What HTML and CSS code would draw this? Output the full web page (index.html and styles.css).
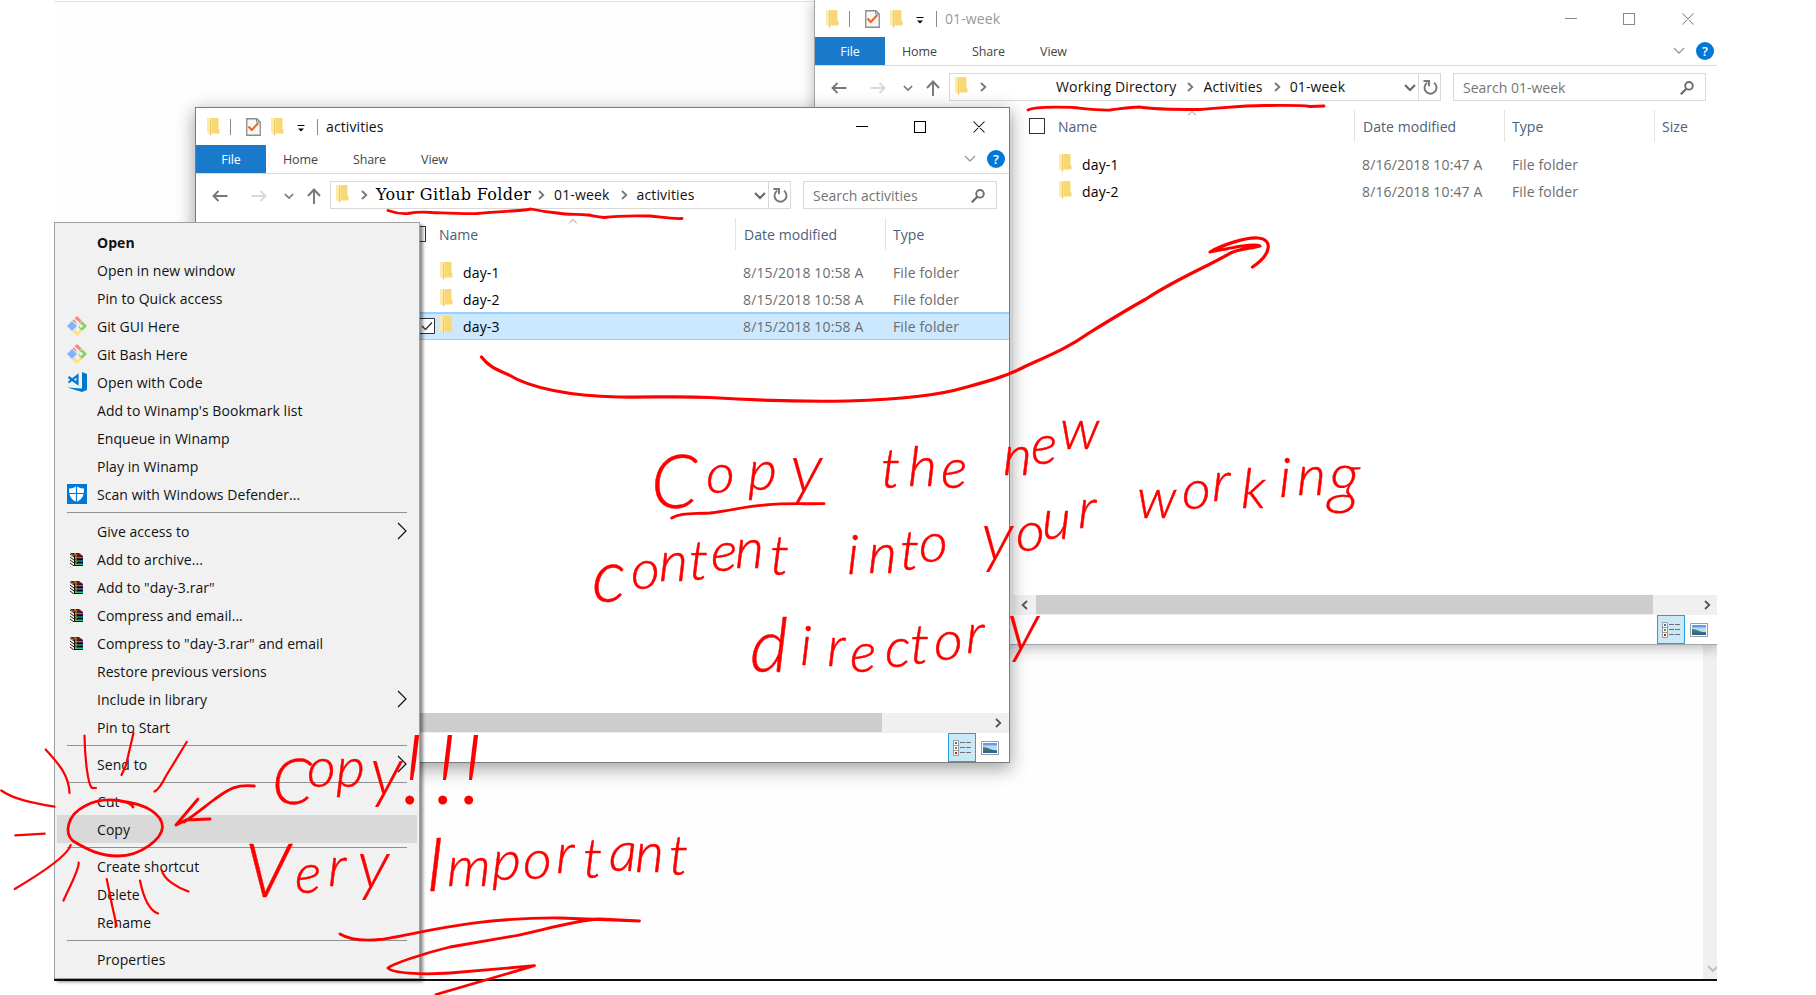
FILE: index.html
```html
<!DOCTYPE html>
<html lang="en">
<head>
<meta charset="utf-8">
<title>Copy the new content</title>
<link rel="stylesheet" href="styles.css">
</head>
<body>
<svg class="defs" width="0" height="0" aria-hidden="true">
  <symbol id="folder" viewBox="0 0 13 18"><path d="M3 0h8.500v11h1v4.500H3z" fill="#f8d775"/><path d="M0 0h3.500l1 2v15.500L0 15z" fill="#ffe9a6"/><path d="M3.500 1.500v16" stroke="#efc964" fill="none"/></symbol>
  <symbol id="props" viewBox="0 0 15 18"><path d="M.75.750h10L14.250 4v13.250H.750z" fill="#f7f7f7" stroke="#8b8b8b" stroke-width="1.300"/><path d="M10.500.800V4h3.700" fill="none" stroke="#8b8b8b"/><path d="M2.500 8.500l3.300 3.500 6.500-7" fill="none" stroke="#f0601e" stroke-width="2"/></symbol>
  <symbol id="more" viewBox="0 0 8 7"><path d="M.500 .500h7" stroke="#000"/><path d="M1 3.500h6L4 6.500z" fill="#000"/></symbol>
  <symbol id="back" viewBox="0 0 16 12"><path d="M15.500 6H1.500M6.500 1l-5 5 5 5" fill="none" stroke="currentColor" stroke-width="1.900"/></symbol>
  <symbol id="up" viewBox="0 0 14 16"><path d="M7 16V1.500M1 8l6-6.500L13 8" fill="none" stroke="#777" stroke-width="1.900"/></symbol>
  <symbol id="down" viewBox="0 0 12 8"><path d="M1 1l5 5 5-5" fill="none" stroke="currentColor" stroke-width="var(--w,2)"/></symbol>
  <symbol id="right" viewBox="0 0 7 10"><path d="M1 1l4.300 4L1 9" fill="none" stroke="currentColor" stroke-width="1.800"/></symbol>
  <symbol id="refresh" viewBox="0 0 15 15"><path d="M4.200 2.700A6 6 0 1 0 11 2.800" fill="none" stroke="#777" stroke-width="1.900"/><path d="M.500 1h5.500v5.300" fill="none" stroke="#777" stroke-width="1.900"/></symbol>
  <symbol id="search" viewBox="0 0 14 14"><circle cx="9" cy="4.800" r="3.800" fill="none" stroke="#6d6d6d" stroke-width="1.900"/><path d="M6.300 7.700L.800 13.300" stroke="#6d6d6d" stroke-width="2.300"/></symbol>
  <symbol id="controls" viewBox="0 0 130 14"><path d="M0 6.500h12M58.500 1.500h11v11h-11zM117.500 1.500l11 11M128.500 1.500l-11 11" fill="none" stroke="currentColor" stroke-width="1.050"/></symbol>
  <symbol id="details" viewBox="0 0 18 16"><path d="M.500.500h5v15h-5zM.500 5.500h5M.500 10.500h5" fill="#fff" stroke="#9a9a9a"/><path d="M2 2h2v2H2z" fill="#3c78b4"/><path d="M2 7h2v2H2z" fill="#7a8040"/><path d="M2 12h2v2H2z" fill="#c02a10"/><path d="M7 2.500h5M13 2.500h5M7 7.500h5M13 7.500h5M7 12.500h5M13 12.500h5" stroke="#707070"/></symbol>
  <symbol id="photo" viewBox="0 0 18 14"><path d="M.500.500h17v13H.500z" fill="#fff" stroke="#9c9c9c"/><path d="M2 2h14v10H2z" fill="#b9dcf8"/><path d="M2 2h14v2.500H2z" fill="#629cf2"/><path d="M2 6c5 0 7 3 14 3.500V10H2z" fill="#4b7b59"/><path d="M2 9.500h14V12H2z" fill="#2f63a0"/></symbol>
  <symbol id="git" viewBox="0 0 20 20"><path d="M10 0l4.500 4.500-4 4.500L5.500 4.500z" fill="#fd8080"/><path d="M5 5l5 5-5 5-5-5z" fill="#80b3ff"/><path d="M15 5l5 5-5 5-5-5z" fill="#87d35f"/><path d="M10 11l5 4.500-5 4.500-5-4.500z" fill="#ffe07d"/><path d="M7 2.500l4 4v8M11 7l4 3.500" fill="none" stroke="#f4f2ef" stroke-width="1.600"/><circle cx="10.500" cy="6.300" r="1.500" fill="#f4f2ef"/><circle cx="14" cy="10" r="1.700" fill="#f4f2ef"/><circle cx="10.500" cy="14" r="1.900" fill="#f4f2ef"/></symbol>
  <symbol id="code" viewBox="0 0 20 20"><path d="M15 0l5 2v16l-5 2L0 15.500l15 1z" fill="#0078cf"/><path d="M1.500 5l9 6.500v-8L1.500 10.500" fill="none" stroke="#0078cf" stroke-width="2.200"/></symbol>
  <symbol id="shield" viewBox="0 0 20 20"><path d="M0 0h20v20H0z" fill="#0078d7"/><path d="M2 4.500c3 .300 5.500-.800 7.500-2.500 2 1.700 4.500 2.800 7.500 2.500 0 6-1 10.500-7.500 13.500C3 15 2 10.500 2 4.500z" fill="#fff"/><path d="M9.500 1v17M2 9.500h16" stroke="#0078d7" stroke-width="1.200"/></symbol>
  <symbol id="rar" viewBox="0 0 13 13"><path d="M0 0h9l4 3H4z" fill="#751018"/><path d="M4 3h9v10H4z" fill="#100808"/><path d="M5 4.500h8" stroke="#d83a9a" stroke-width="1.500"/><path d="M5 8h8" stroke="#1776c4" stroke-width="1.600"/><path d="M5 11.300h8" stroke="#0fc97c" stroke-width="1.600"/><path d="M0 1l4 3M0 4l4 3M0 7l4 3M0 10l4 3" stroke="#222" fill="none"/><path d="M4 1h2v11" stroke="#c9b000" fill="none"/></symbol>
  <symbol id="sub" viewBox="0 0 10 18"><path d="M1 1l8 8-8 8" fill="none" stroke="#111" stroke-width="1.200"/></symbol>
</svg>

<main class="desktop">
  <section class="backdrop"><div class="backdrop-scroll"><svg class="ic chev"><use href="#down"/></svg></div></section>

  <section class="window inactive">
    <header class="titlebar">
      <svg class="ic fold"><use href="#folder"/></svg><i class="bar"></i><svg class="ic props"><use href="#props"/></svg><svg class="ic fold2"><use href="#folder"/></svg><svg class="ic more"><use href="#more"/></svg><i class="bar last"></i>
      <h2 class="title">01-week</h2><svg class="ic controls"><use href="#controls"/></svg>
    </header>
    <nav class="tabs"><span class="tab file">File</span><span class="tab">Home</span><span class="tab share">Share</span><span class="tab view">View</span><svg class="ic expand"><use href="#down"/></svg><span class="help">?</span></nav>
    <div class="navrow">
      <svg class="ic arrow"><use href="#back"/></svg><svg class="ic arrow fwd"><use href="#back"/></svg><svg class="ic recent"><use href="#down"/></svg><svg class="ic up"><use href="#up"/></svg>
      <div class="address"><svg class="ic fold"><use href="#folder"/></svg><svg class="ic sep first"><use href="#right"/></svg><span class="crumb working">Working Directory</span><svg class="ic sep"><use href="#right"/></svg><span class="crumb">Activities</span><svg class="ic sep"><use href="#right"/></svg><span class="crumb">01-week</span><svg class="ic drop"><use href="#down"/></svg><span class="reload"><svg class="ic refresh"><use href="#refresh"/></svg></span></div>
      <div class="search"><span>Search 01-week</span><svg class="ic mag"><use href="#search"/></svg></div>
    </div>
    <div class="body">
      <div class="tree"></div>
      <div class="files">
        <div class="head"><i class="box"></i><span class="c-name">Name</span><span class="c-date">Date modified</span><span class="c-type">Type</span><span class="c-size">Size</span><svg class="ic sort"><use href="#down"/></svg></div>
        <div class="rows">
          <div class="row"><svg class="ic fold"><use href="#folder"/></svg><span class="c-name">day-1</span><span class="c-date">8/16/2018 10:47 A</span><span class="c-type">File folder</span></div>
          <div class="row"><svg class="ic fold"><use href="#folder"/></svg><span class="c-name">day-2</span><span class="c-date">8/16/2018 10:47 A</span><span class="c-type">File folder</span></div>
        </div>
        <div class="scroll"><svg class="ic sleft"><use href="#right"/></svg><i class="thumb"></i><svg class="ic sright"><use href="#right"/></svg></div>
      </div>
    </div>
    <footer class="status"><span class="viewbtn"><svg class="ic details"><use href="#details"/></svg></span><svg class="ic photo"><use href="#photo"/></svg></footer>
  </section>

  <section class="window active">
    <header class="titlebar">
      <svg class="ic fold"><use href="#folder"/></svg><i class="bar"></i><svg class="ic props"><use href="#props"/></svg><svg class="ic fold2"><use href="#folder"/></svg><svg class="ic more"><use href="#more"/></svg><i class="bar last"></i>
      <h2 class="title">activities</h2><svg class="ic controls"><use href="#controls"/></svg>
    </header>
    <nav class="tabs"><span class="tab file">File</span><span class="tab">Home</span><span class="tab share">Share</span><span class="tab view">View</span><svg class="ic expand"><use href="#down"/></svg><span class="help">?</span></nav>
    <div class="navrow">
      <svg class="ic arrow"><use href="#back"/></svg><svg class="ic arrow fwd"><use href="#back"/></svg><svg class="ic recent"><use href="#down"/></svg><svg class="ic up"><use href="#up"/></svg>
      <div class="address"><svg class="ic fold"><use href="#folder"/></svg><svg class="ic sep first"><use href="#right"/></svg><span class="crumb gitlab">Your Gitlab Folder</span><svg class="ic sep"><use href="#right"/></svg><span class="crumb">01-week</span><svg class="ic sep"><use href="#right"/></svg><span class="crumb">activities</span><svg class="ic drop"><use href="#down"/></svg><span class="reload"><svg class="ic refresh"><use href="#refresh"/></svg></span></div>
      <div class="search"><span>Search activities</span><svg class="ic mag"><use href="#search"/></svg></div>
    </div>
    <div class="body">
      <div class="tree"></div>
      <div class="files">
        <div class="head"><i class="box"></i><span class="c-name">Name</span><span class="c-date">Date modified</span><span class="c-type">Type</span><svg class="ic sort"><use href="#down"/></svg></div>
        <div class="rows">
          <div class="row"><svg class="ic fold"><use href="#folder"/></svg><span class="c-name">day-1</span><span class="c-date">8/15/2018 10:58 A</span><span class="c-type">File folder</span></div>
          <div class="row"><svg class="ic fold"><use href="#folder"/></svg><span class="c-name">day-2</span><span class="c-date">8/15/2018 10:58 A</span><span class="c-type">File folder</span></div>
          <div class="row selected"><svg class="check" viewBox="0 0 16 16"><path d="M.500.500h15v15H.500z" fill="#fff" stroke="#333"/><path d="M3 8l3.500 3.500L13 4.500" fill="none" stroke="#333" stroke-width="1.400"/></svg><svg class="ic fold"><use href="#folder"/></svg><span class="c-name">day-3</span><span class="c-date">8/15/2018 10:58 A</span><span class="c-type">File folder</span></div>
        </div>
        <div class="scroll"><svg class="ic sleft"><use href="#right"/></svg><i class="thumb"></i><svg class="ic sright"><use href="#right"/></svg></div>
      </div>
    </div>
    <footer class="status"><span class="viewbtn"><svg class="ic details"><use href="#details"/></svg></span><svg class="ic photo"><use href="#photo"/></svg></footer>
  </section>

  <ul class="menu">
    <li class="item bold"><i class="slot"></i><span>Open</span></li>
    <li class="item"><i class="slot"></i><span>Open in new window</span></li>
    <li class="item"><i class="slot"></i><span>Pin to Quick access</span></li>
    <li class="item"><svg class="slot"><use href="#git"/></svg><span>Git GUI Here</span></li>
    <li class="item"><svg class="slot"><use href="#git"/></svg><span>Git Bash Here</span></li>
    <li class="item"><svg class="slot"><use href="#code"/></svg><span>Open with Code</span></li>
    <li class="item"><i class="slot"></i><span>Add to Winamp's Bookmark list</span></li>
    <li class="item"><i class="slot"></i><span>Enqueue in Winamp</span></li>
    <li class="item"><i class="slot"></i><span>Play in Winamp</span></li>
    <li class="item"><svg class="slot"><use href="#shield"/></svg><span>Scan with Windows Defender...</span></li>
    <li class="rule"></li>
    <li class="item"><i class="slot"></i><span>Give access to</span><svg class="sub"><use href="#sub"/></svg></li>
    <li class="item"><svg class="slot rar"><use href="#rar"/></svg><span>Add to archive...</span></li>
    <li class="item"><svg class="slot rar"><use href="#rar"/></svg><span>Add to "day-3.rar"</span></li>
    <li class="item"><svg class="slot rar"><use href="#rar"/></svg><span>Compress and email...</span></li>
    <li class="item"><svg class="slot rar"><use href="#rar"/></svg><span>Compress to "day-3.rar" and email</span></li>
    <li class="item"><i class="slot"></i><span>Restore previous versions</span></li>
    <li class="item"><i class="slot"></i><span>Include in library</span><svg class="sub"><use href="#sub"/></svg></li>
    <li class="item"><i class="slot"></i><span>Pin to Start</span></li>
    <li class="rule"></li>
    <li class="item"><i class="slot"></i><span>Send to</span><svg class="sub"><use href="#sub"/></svg></li>
    <li class="rule"></li>
    <li class="item"><i class="slot"></i><span>Cut</span></li>
    <li class="item hover"><i class="slot"></i><span>Copy</span></li>
    <li class="rule"></li>
    <li class="item"><i class="slot"></i><span>Create shortcut</span></li>
    <li class="item"><i class="slot"></i><span>Delete</span></li>
    <li class="item"><i class="slot"></i><span>Rename</span></li>
    <li class="rule"></li>
    <li class="item"><i class="slot"></i><span>Properties</span></li>
  </ul>
</main>

<svg class="ink" viewBox="0 0 1816 995">
  <g class="strokes">
    <path d="M1028 110C1036 106 1060 107 1073 107.500C1088 109 1098 110.500 1110 110C1120 109 1130 107 1139 107C1150 109 1180 109.500 1200 109.500C1225 108 1240 105.500 1265 105.500S1300 105 1310 106.500L1324 106"/>
    <path d="M388 210.500C395 213 402 214 408 213.500C416 212 424 212 432 212.500C446 213 462 214 477 213.500C495 211 515 212 531 209C540 211 547 212 557 213C568 215 578 214 588 215C594 216 598 217 604 217.500C615 216 630 215.500 650 216C662 217 670 219 682 218.500"/>
    <path class="bold-ink" d="M481.500 357C490 368 498 370 509 375C530 388 570 396 618 397C650 397.500 680 396 710 397.500C750 400 800 402 848 401C880 400 930 398 963 388C985 382 1005 377 1026 366C1048 356 1068 348 1089 333C1110 320 1128 309 1146 299C1175 280 1200 270 1227 255C1238 248 1250 249 1260 246C1255 243 1235 247 1210 252C1220 246 1245 237 1258 238C1273 239 1272 254 1252.500 267"/>
    <path d="M671.700 518C680 513 690 514 710 513C735 510 745 506 765 505C785 503 800 504 824 503.700"/>
    <path d="M133 807C130 800 103 796 85 806C67 815 64 833 73 841C88 850 100 856 118 856C142 856 162 838 162.500 827C162 815 148 804 120 801"/>
    <path d="M254.300 786C235 784 228 790 215 799C203 808 193 816 184 822M210 819L186 820L176 825L198 799"/>
    <path d="M340 934C350 940 365 941 380 939.500C410 936 470 917 560 918L639.500 921L600 919C575 920 540 931 514 936L450 947C425 953 392 964 388 968C392 973 420 975 450 973L534.500 965.700L436 994.500"/>
    <path class="ray" d="M45.700 749.500C58 763 69 775 69.500 793M84.500 735.700C85 760 88 785 92 788L96 788M133.500 733L126 765L121.500 775M186.700 742L166 776C162 784 158 790 154.500 791.500M1.300 790.500C13 799 32 803 54.500 806.700M15.300 835.300L44.700 833.700M70.700 845C68 855 40 874 14.700 889M78.700 862.700C79 870 68 890 63.500 900.500M106.700 879L112 905L116.700 926M140 880.700C143 895 148 910 158 913.500M161.700 870C164 880 178 888 188.500 891.500"/>
  </g>
  <g class="hand">
    <text><tspan class="cap" x="651" y="508">C</tspan><tspan x="706 748" y="493 490">op</tspan><tspan class="tail" x="790" y="492">y</tspan></text>
    <text x="881 908 941" y="488 486 488">the</text>
    <text x="1003 1031 1060" y="475 464 449">new</text>
    <text><tspan class="cap" x="592" y="602">c</tspan><tspan x="631 659 689 711 735 770" y="589 581 580 571 568 575">ontent</tspan></text>
    <text x="847 868 900 919" y="574 573 570 562">into</text>
    <text><tspan class="tail" x="981" y="560">y</tspan><tspan x="1016 1042 1078" y="551 539 528">our</tspan></text>
    <text><tspan x="1137 1182 1212 1241 1279 1297" y="518 509 501 508 497 495">workin</tspan><tspan class="tail" x="1328" y="500">g</tspan></text>
    <text><tspan class="cap" x="750" y="672">d</tspan><tspan x="800 827 850 885 910 934 966" y="665 666 672 667 664 660 653">irector</tspan><tspan class="tail" x="1007" y="650">y</tspan></text>
    <text><tspan class="mid" x="272" y="804">C</tspan><tspan x="307 336" y="787 787">op</tspan><tspan class="tail" x="370" y="795">y</tspan><tspan class="bang" x="401 434 460" y="804 804 804">!!!</tspan></text>
    <text><tspan class="cap" x="245" y="897">V</tspan><tspan x="295 328" y="893 886">er</tspan><tspan class="tail" x="357" y="888">y</tspan></text>
    <text><tspan class="cap" x="426" y="891">I</tspan><tspan x="447 492 523 556 583 609 635 669" y="886 880 879 873 878 871 872 875">mportant</tspan></text>
  </g>
</svg>
</body>
</html>
```
FILE: styles.css
```css
* { box-sizing: border-box; }
html, body { margin: 0; height: 100%; }
body { position: relative; overflow: hidden; background: #fff; font: 14px/20px "Open Sans", "Noto Sans", sans-serif; color: #111; }
i { font-style: normal; }
.defs { position: absolute; }
.ic { flex: none; display: block; overflow: visible; }
.fold { width: 13px; height: 18px; }

.desktop { position: relative; width: 1717px; height: 995px; overflow: hidden; }
.backdrop { position: absolute; left: 54px; top: 1px; right: 0; height: 980px; border-top: 1px solid #e3e3e3; border-bottom: 2px solid #111; background: #fefefe; display: flex; justify-content: flex-end; }
.backdrop-scroll { width: 14px; background: #f0f0f0; display: flex; align-items: flex-end; padding: 0 0 6px 4px; }
.chev { width: 12px; height: 8px; color: #bfbfbf; }

.window { position: absolute; display: flex; flex-direction: column; border: 1px solid #7c7c7c; background: #fff; }
.active { left: 195px; top: 107px; width: 815px; height: 656px; box-shadow: 0 5px 17px 1px rgba(0,0,0,.36); }
.inactive { left: 814px; top: -1px; width: 905px; height: 646px; border-color: #a5a5a5; box-shadow: 0 3px 13px rgba(0,0,0,.28); }

.titlebar { height: 37px; flex: none; display: flex; align-items: center; padding: 0 23px 0 11px; }
.titlebar .fold, .titlebar .fold2 { width: 13px; height: 18px; }
.titlebar .fold { margin-right: 10px; }
.bar { width: 1px; height: 16px; background: #8a8a8a; }
.props { width: 15px; height: 18px; margin: 0 10px 0 15px; }
.more { width: 8px; height: 7px; margin: 3px 12px 0 13px; }
.title { margin: 0 auto 0 8px; font-size: 14px; font-weight: 400; letter-spacing: .1px; }
.inactive .title { color: #999; }
.controls { width: 130px; height: 14px; color: #000; }
.inactive .controls { color: #888; }

.tabs { height: 29px; flex: none; display: flex; align-items: center; border-bottom: 1px solid #dadada; font-size: 12.500px; color: #444; padding-right: 4px; }
.tab { margin-left: 17px; padding-top: 2px; letter-spacing: -.1px; }
.file { align-self: stretch; width: 70px; margin: 0; padding-top: 1px; background: #1979ca; color: #fff; text-align: center; line-height: 28px; }
.share { margin-left: 35px; }
.view { margin-left: 35px; }
.expand { --w: 1.300; width: 12px; height: 8px; margin-left: auto; color: #999; }
.help { width: 18px; height: 18px; margin-left: 11px; border-radius: 50%; background: #0078d7; color: #fff; font-weight: 600; font-size: 13px; line-height: 18px; text-align: center; }

.navrow { height: 44px; flex: none; display: flex; align-items: flex-start; padding: 7px 12px 0 16px; }
.arrow { width: 16px; height: 12px; margin: 9px 23px 0 0; color: #777; }
.fwd { transform: scaleX(-1); color: #d9d9d9; margin-right: 17px; }
.recent { width: 10px; height: 7px; margin: 12px 13px 0 0; color: #777; }
.up { width: 14px; height: 16px; margin: 7px 9px 0 0; }
.address { flex: 1; height: 28px; display: flex; align-items: center; border: 1px solid #d9d9d9; padding-left: 5px; margin-right: 12px; }
.address .fold { margin-right: 12px; margin-bottom: 3px; }
.sep { width: 7px; height: 10px; color: #777; margin: 0 9px 0 11px; }
.sep.first { margin: 0 8px 0 0; }
.crumb { white-space: nowrap; letter-spacing: .15px; }
.working { margin-left: 61px; }
.gitlab { font: 16px/20px "DejaVu Serif", serif; letter-spacing: .38px; width: 155px; color: #000; }
.gitlab + .sep { margin-left: 7px; }
.drop { width: 12px; height: 8px; margin: 2px 2px 0 auto; color: #666; }
.reload { align-self: stretch; width: 22px; border-left: 1px solid #d9d9d9; display: flex; align-items: center; padding: 1px 0 0 4px; }
.refresh { width: 15px; height: 15px; }
.search { width: 194px; height: 28px; display: flex; align-items: center; justify-content: space-between; border: 1px solid #d9d9d9; padding: 1px 11px 0 9px; color: #757575; }
.inactive .search { width: 253px; }
.mag { width: 14px; height: 14px; }

.body { flex: 1; display: flex; min-height: 0; }
.tree { width: 198px; flex: none; border-right: 1px solid #f4f4f4; }
.files { flex: 1; display: flex; flex-direction: column; min-width: 0; }
.c-name, .c-date, .c-type, .c-size, .box { flex: none; }
.head { position: relative; height: 32px; flex: none; display: flex; align-items: center; color: #4c607a; padding-left: 16px; overflow: hidden; }
.box { width: 16px; height: 16px; border: 1px solid #333; background: #fff; }
.head .c-name { width: 309px; padding: 1px 0 0 13px; }
.head .c-date, .head .c-type, .head .c-size { height: 32px; line-height: 34px; border-left: 1px solid #e3e3e3; padding-left: 8px; width: 150px; letter-spacing: .05px; }
.head .c-type { padding-left: 7px; }
.head .c-size { width: 60px; padding-left: 7px; }
.sort { --w: 1; position: absolute; left: 174px; top: 0; width: 10px; height: 6px; color: #666; transform: scaleY(-1); }
.rows { flex: 1; padding-top: 9px; }
.row { position: relative; height: 27px; display: flex; align-items: center; padding-left: 46px; color: #6d6d6d; }
.row .fold { margin-bottom: 4px; }
.row .c-name { width: 290px; padding-left: 10px; color: #000; letter-spacing: .15px; }
.row .c-date { width: 150px; letter-spacing: .14px; }
.row .c-type { letter-spacing: .14px; }
.selected { background: #cce8ff; box-shadow: inset 0 1px #99d1ff, inset 0 -1px #99d1ff, 0 -1px #99d1ff; }
.check { position: absolute; left: 25px; top: 5px; width: 16px; height: 16px; }
.scroll { height: 20px; flex: none; display: flex; align-items: center; background: #f0f0f0; padding-right: 5px; }
.inactive .scroll { padding-left: 2px; }
.thumb { width: 467px; height: 19px; align-self: flex-start; margin-right: auto; background: #cdcdcd; }
.inactive .thumb { width: 617px; }
.sleft { width: 7px; height: 10px; margin: 0 8px 0 6px; transform: scaleX(-1); color: #555; }
.sright { width: 7px; height: 10px; color: #555; margin-right: 2px; }
.status { height: 29px; flex: none; display: flex; justify-content: flex-end; align-items: center; padding-right: 10px; }
.viewbtn { width: 28px; height: 29px; display: grid; place-items: center; border: 1px solid #26a0da; background: #cbe8f6; margin-right: 5px; }
.details { width: 18px; height: 16px; }
.photo { width: 18px; height: 14px; }

.menu { position: absolute; left: 54px; top: 222px; width: 366px; height: 757px; margin: 0; padding: 5px 2px; list-style: none; background: #f1f1f1; border: 1px solid #a0a0a0; box-shadow: 3px 3px 3px rgba(0,0,0,.45); }
.item { height: 28px; display: flex; align-items: center; padding: 0 10px; white-space: nowrap; letter-spacing: .06px; }
.item span { padding-top: 2px; }
.hover { background: #d9d9d9; }
.bold { font-weight: 700; }
.slot { width: 20px; height: 20px; margin-right: 10px; flex: none; }
.slot.rar { width: 13px; height: 13px; margin: 0 14px 0 3px; overflow: visible; }
.sub { width: 10px; height: 18px; margin-left: auto; }
.rule { height: 9px; margin: 0 10px; padding-top: 4px; }
.rule::before { content: ""; display: block; height: 1px; background: #919191; }

.ink { position: absolute; left: 0; top: 0; width: 1816px; height: 995px; pointer-events: none; }
.strokes { fill: none; stroke: #f00; stroke-width: 2.800; stroke-linecap: round; stroke-linejoin: round; }
.bold-ink { stroke-width: 3.200; }
.ray { stroke-width: 2.200; }
.hand { font-family: Lato, "Open Sans", sans-serif; font-style: italic; font-weight: 300; font-size: 56px; fill: #f00; stroke: #f00; stroke-width: .5px; }
.cap { font-size: 74px; }
.mid { font-size: 64px; }
.tail { font-size: 70px; stroke-width: .2px; }
.bang { font-size: 96px; stroke-width: 0; }
```
